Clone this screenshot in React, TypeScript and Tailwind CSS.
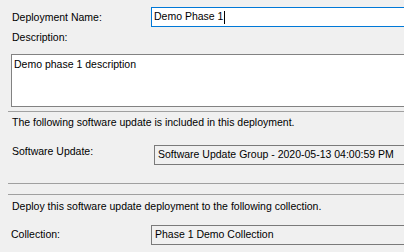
import type { FC } from 'react'

const font = { fontFamily: '"Liberation Sans", Arial, sans-serif' }

const App: FC = () => {
  return (
    <div
      className="w-[404px] h-[252px] overflow-hidden bg-[#f0f0f0] text-[10.5px] text-black flex flex-col"
      style={font}
    >
      {/* Deployment name */}
      <div className="flex items-center h-[20px] mt-[7px]">
        <span className="w-[151px] pl-[12px] leading-[16px] shrink-0">Deployment Name:</span>
        <div className="flex-1 -mr-[20px] h-[20px] border border-[#0078d7] bg-white flex items-center pl-[2px]">
          <span>Demo Phase 1</span>
          <span className="w-px h-[13px] bg-black ml-px" />
        </div>
      </div>

      {/* Description */}
      <div className="h-[16px] leading-[16px] mt-[2px] pl-[12px]">Description:</div>
      <div className="ml-[11px] -mr-[20px] mt-[9px] h-[53px] shrink-0 border border-[#828282] bg-white pl-[2px] pt-[2px] leading-[14px]">
        Demo phase 1 description
      </div>

      <div className="ml-[8px] mt-[4px] h-px shrink-0 bg-[#a0a0a0]" />
      <div className="h-[16px] leading-[16px] mt-[2px] pl-[12px]">
        The following software update is included in this deployment.
      </div>

      {/* Software update */}
      <div className="flex items-start mt-[13px] h-[22px] shrink-0">
        <span className="w-[154px] pl-[12px] leading-[16px] shrink-0">Software Update:</span>
        <div className="flex-1 -mr-[20px] mt-[2px] h-[20px] border border-[#7a7a7a] bg-[#f0f0f0] flex items-center pl-[3px]">
          Software Update Group - 2020-05-13 04:00:59 PM
        </div>
      </div>

      <div className="ml-[8px] mt-[18px] h-px shrink-0 bg-[#a0a0a0]" />
      <div className="ml-[8px] mt-[10px] h-px shrink-0 bg-[#a0a0a0]" />
      <div className="h-[16px] leading-[16px] mt-[3px] pl-[12px]">
        Deploy this software update deployment to the following collection.
      </div>

      {/* Collection */}
      <div className="flex items-start mt-[11px] h-[20px] shrink-0">
        <span className="w-[151px] pl-[11px] mt-[1px] leading-[16px] shrink-0">Collection:</span>
        <div className="flex-1 -mr-[20px] h-[20px] border border-[#7a7a7a] bg-[#f0f0f0] flex items-center pl-[3px]">
          Phase 1 Demo Collection
        </div>
      </div>
    </div>
  )
}

export default App
